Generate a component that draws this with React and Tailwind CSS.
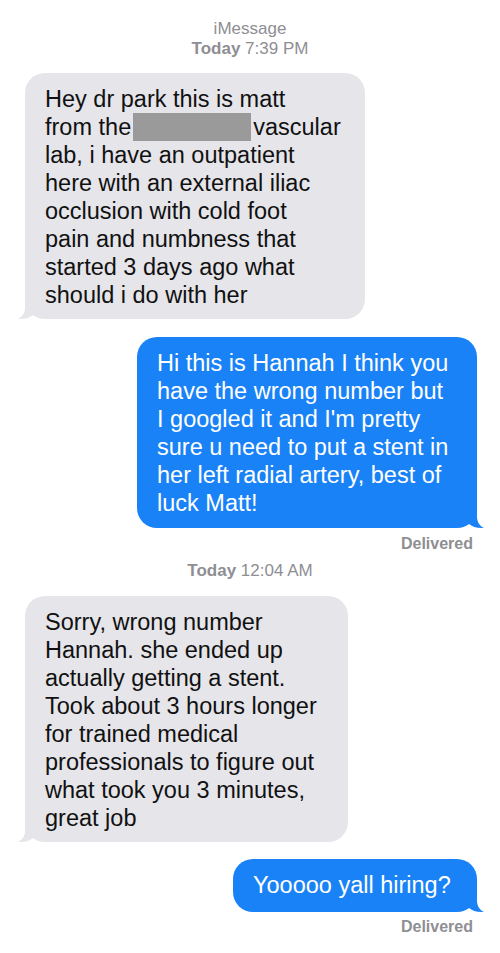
import React from "react";

const font = { fontFamily: '"Liberation Sans", Arial, sans-serif' };

const TailLeft = () => (
  <svg
    className="absolute -left-[7px] -bottom-[1px]"
    width="24"
    height="24"
    viewBox="0 0 24 24"
  >
    <path d="M7 0 L7 12 C7 17 4 21 0 23 C7 23.5 12 21.5 15 19 L24 19 L24 0 Z" fill="#e5e5ea" />
  </svg>
);

const TailRight = () => (
  <svg
    className="absolute -right-[7px] -bottom-[1px]"
    width="24"
    height="24"
    viewBox="0 0 24 24"
  >
    <path d="M17 0 L17 12 C17 17 20 21 24 23 C17 23.5 12 21.5 9 19 L0 19 L0 0 Z" fill="#1a82f7" />
  </svg>
);

const Lines = ({ lines }) => (
  <>
    {lines.map((l, i) => (
      <div key={i} className="whitespace-nowrap">
        {l}
      </div>
    ))}
  </>
);

const Received = ({ children, width }) => (
  <div className="flex justify-start pl-[25px]">
    <div
      className={`relative rounded-[20px] bg-[#e5e5ea] pl-[20px] pr-4 pt-[12px] pb-[10px] text-[23.5px] leading-[28px] text-[#111] ${width}`}
    >
      <TailLeft />
      <div className="relative">{children}</div>
    </div>
  </div>
);

const Sent = ({ children, width, pb }) => (
  <div className="flex justify-end pr-[23px]">
    <div
      className={`relative rounded-[20px] bg-[#1a82f7] pl-[20px] pr-4 pt-[12px] text-[23.5px] leading-[28px] text-white ${pb} ${width}`}
    >
      <TailRight />
      <div className="relative">{children}</div>
    </div>
  </div>
);

const Stamp = ({ time }) => (
  <div className="text-center text-[17px] leading-[20px] text-[#8e8e93]">
    <span className="font-bold">Today</span> {time}
  </div>
);

const Delivered = ({ mt }) => (
  <div className={`pr-[27px] text-right text-[16px] font-bold leading-[18px] text-[#8e8e93] ${mt}`}>
    Delivered
  </div>
);

export default function App() {
  return (
    <div className="h-[953px] w-[500px] overflow-hidden bg-white" style={font}>
      <div className="pt-[19px]">
        <div className="text-center text-[17px] leading-[20px] text-[#8e8e93]">iMessage</div>
        <Stamp time="7:39 PM" />
      </div>

      <div className="mt-[14px]">
        <Received width="w-[340px]">
          <div className="whitespace-nowrap">Hey dr park this is matt</div>
          <div className="flex items-center whitespace-nowrap">
            <span>from the</span>
            <span className="mx-[2px] inline-block h-[28px] w-[118px] bg-[#9a9a9a]" />
            <span>vascular</span>
          </div>
          <Lines
            lines={[
              "lab, i have an outpatient",
              "here with an external iliac",
              "occlusion with cold foot",
              "pain and numbness that",
              "started 3 days ago what",
              "should i do with her",
            ]}
          />
        </Received>
      </div>

      <div className="mt-[18px]">
        <Sent width="w-[340px]" pb="pb-[11px]">
          <Lines
            lines={[
              "Hi this is Hannah I think you",
              "have the wrong number but",
              "I googled it and I'm pretty",
              "sure u need to put a stent in",
              "her left radial artery, best of",
              "luck Matt!",
            ]}
          />
        </Sent>
      </div>
      <Delivered mt="mt-[7px]" />

      <div className="mt-[8px]">
        <Stamp time="12:04 AM" />
      </div>

      <div className="mt-[15px]">
        <Received width="w-[323px]">
          <Lines
            lines={[
              "Sorry, wrong number",
              "Hannah. she ended up",
              "actually getting a stent.",
              "Took about 3 hours longer",
              "for trained medical",
              "professionals to figure out",
              "what took you 3 minutes,",
              "great job",
            ]}
          />
        </Received>
      </div>

      <div className="mt-[17px]">
        <Sent width="w-[244px]" pb="pb-[13px]">
          <div className="whitespace-nowrap">Yooooo yall hiring?</div>
        </Sent>
      </div>
      <Delivered mt="mt-[6px]" />
    </div>
  );
}
